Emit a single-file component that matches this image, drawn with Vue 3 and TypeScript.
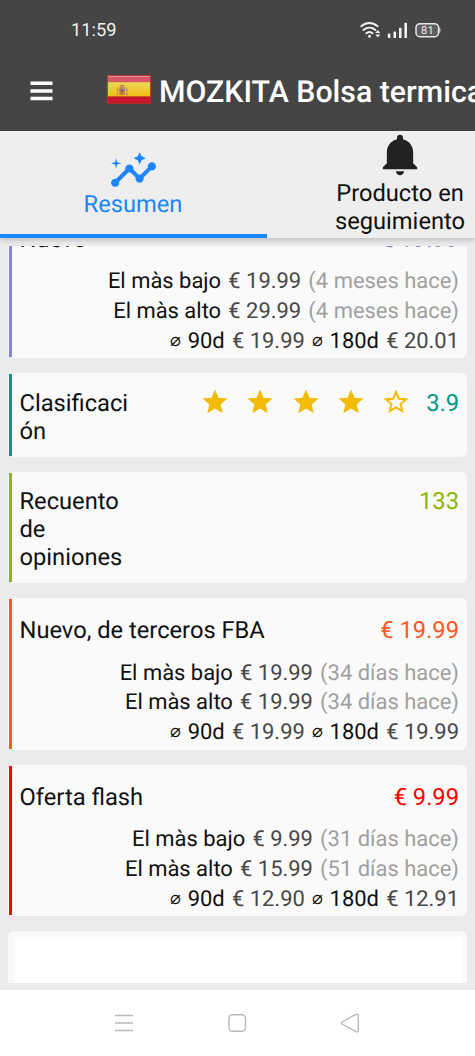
<script setup lang="ts">
interface HistoryRow {
  label: string
  price: string
  age: string
}

interface Card {
  title: string
  value: string
  tone: string
  rating?: number
  narrow?: boolean
  rows?: HistoryRow[]
  averages?: [string, string]
}

const cards: Card[] = [
  {
    title: 'Nuevo',
    value: '€ 19.99',
    tone: 'violet',
    rows: [
      { label: 'El màs bajo', price: '€ 19.99', age: '(4 meses hace)' },
      { label: 'El màs alto', price: '€ 29.99', age: '(4 meses hace)' },
    ],
    averages: ['€ 19.99', '€ 20.01'],
  },
  { title: 'Clasificación', value: '3.9', tone: 'teal', rating: 4, narrow: true },
  { title: 'Recuento de opiniones', value: '133', tone: 'olive', narrow: true },
  {
    title: 'Nuevo, de terceros FBA',
    value: '€ 19.99',
    tone: 'orange',
    rows: [
      { label: 'El màs bajo', price: '€ 19.99', age: '(34 días hace)' },
      { label: 'El màs alto', price: '€ 19.99', age: '(34 días hace)' },
    ],
    averages: ['€ 19.99', '€ 19.99'],
  },
  {
    title: 'Oferta flash',
    value: '€ 9.99',
    tone: 'red',
    rows: [
      { label: 'El màs bajo', price: '€ 9.99', age: '(31 días hace)' },
      { label: 'El màs alto', price: '€ 15.99', age: '(51 días hace)' },
    ],
    averages: ['€ 12.90', '€ 12.91'],
  },
]

const fullStar =
  'M12 17.27L18.18 21l-1.64-7.03L22 9.24l-7.19-.61L12 2 9.19 8.63 2 9.24l5.46 4.73L5.82 21z'
const emptyStar =
  'M22 9.24l-7.19-.62L12 2 9.19 8.63 2 9.24l5.46 4.73L5.82 21 12 17.27 18.18 21l-1.63-7.03L22 9.24zM12 15.4l-3.76 2.27 1-4.28-3.32-2.88 4.38-.38L12 6.1l1.71 4.04 4.38.38-3.32 2.88 1 4.28L12 15.4z'
</script>

<template>
  <div class="phone">
    <header class="top">
      <div class="status">
        <span class="clock">11:59</span>
        <svg class="signals" width="84" height="20" viewBox="0 0 84 20">
          <g fill="none" stroke="#f2f2f2" stroke-width="1.9" stroke-linecap="round">
            <path d="M2.2 6.2c5-4.2 11.400-4.200 16.400 0" />
            <path d="M4.500 9.900c3.600-3 8.300-3 11.900 0" />
            <path d="M7.300 13.300c2-1.600 4.400-1.600 6.300 0" />
          </g>
          <circle cx="10.500" cy="16.300" r="1.500" fill="#f2f2f2" />
          <path d="M16.300 12.900l2.500-3 2.500 3zM16.300 14.600h5l-2.500 3z" fill="#f2f2f2" />
          <g fill="#f2f2f2">
            <rect x="28.800" y="13.500" width="2.600" height="4.500" rx=".6" />
            <rect x="34.500" y="11.500" width="2.600" height="6.500" rx=".6" />
            <rect x="40" y="7.800" width="2.600" height="10.200" rx=".6" />
            <rect x="45.400" y="2.700" width="2.600" height="15.300" rx=".6" />
          </g>
          <rect x="57" y="3.700" width="22.600" height="13" rx="4" fill="#fff" fill-opacity=".14" stroke="#e8e8e8" stroke-width="1.500" />
          <path d="M80.300 7.300c1.500.8 1.500 5 0 5.800z" fill="#e8e8e8" />
          <text x="68.400" y="14.200" text-anchor="middle" class="battery">81</text>
        </svg>
      </div>
      <div class="bar">
        <svg class="menu" width="23" height="20" viewBox="0 0 23 20">
          <path d="M.5 2.200h22M.5 10h22M.5 17.400h22" stroke="#fff" stroke-width="3.500" />
        </svg>
        <svg class="flag" width="44" height="29" viewBox="0 0 44 29">
          <defs>
            <linearGradient id="gold" x1="0" y1="0" x2="0" y2="1">
              <stop offset="0" stop-color="#ecd65a" />
              <stop offset="1" stop-color="#f2bd12" />
            </linearGradient>
          </defs>
          <rect width="44" height="29" fill="#a92e2c" />
          <rect x=".8" y=".8" width="42.400" height="7" fill="#d95668" />
          <rect x=".8" y="7.200" width="42.400" height="14.400" fill="url(#gold)" />
          <rect x=".8" y="21.600" width="42.400" height="6.400" fill="#c5162c" />
          <path d="M1 1.400h42" stroke="#e8a0a5" stroke-width=".8" />
          <path d="M10.600 12.500v7.500M19.600 12.500v7.500" stroke="#c4a652" stroke-width="1.300" />
          <path d="M9.300 19.600h2.400M18.600 19.600h2.400M9.600 14.800h2M18.600 14.800h2" stroke="#b5853f" stroke-width=".9" />
          <path d="M12.300 12.200h5.600v5.500c0 3.500-5.600 3.500-5.600 0z" fill="#c07c48" />
          <path d="M15.300 12.300h2.600v3.400h-2.600z" fill="#9c94a0" />
          <path d="M12.600 11.400c0-2 5-2 5 0z" fill="#bd6a3a" />
          <circle cx="15.200" cy="15.700" r="1.200" fill="#5c5c83" />
        </svg>
        <h1 class="heading">MOZKITA Bolsa termica</h1>
      </div>
    </header>

    <nav class="tabs">
      <div class="tab tab-active">
        <svg width="49" height="49" viewBox="0 0 24 24" fill="#1b87fa">
          <path d="M21 8c-1.450 0-2.260 1.440-1.930 2.510l-3.550 3.560c-.3-.09-.74-.09-1.040 0l-2.550-2.550C12.270 10.450 11.460 9 10 9c-1.450 0-2.270 1.440-1.930 2.520l-4.560 4.550C2.440 15.740 1 16.550 1 18c0 1.100.9 2 2 2 1.450 0 2.260-1.440 1.930-2.510l4.550-4.560c.3.09.74.09 1.040 0l2.550 2.550C12.730 16.550 13.540 18 15 18c1.450 0 2.270-1.440 1.930-2.520l3.560-3.550C21.560 12.260 23 11.450 23 10c0-1.100-.9-2-2-2z" />
          <path d="M15 9l.94-2.070L18 6l-2.060-.93L15 3l-.92 2.070L12 6l2.080.93zM3.500 11L4 9l2-.5L4 8l-.5-2L3 8l-2 .5L3 9z" />
        </svg>
        <span class="tab-label">Resumen</span>
      </div>
      <div class="tab tab-track">
        <svg width="50" height="50" viewBox="0 0 512 512" fill="#222">
          <path d="M256 464c22.779 0 41.411-18.719 41.411-41.600h-82.823c0 22.881 18.633 41.600 41.412 41.600zm134.589-124.800V224.800c0-63.440-44.516-117.518-103.530-131.041V79.200c0-17.682-13.457-31.200-31.059-31.200s-31.059 13.518-31.059 31.200v14.559c-59.015 13.523-103.530 67.601-103.530 131.041v114.400L80 380.800v20.800h352v-20.800l-41.411-41.600z" />
        </svg>
        <span class="tab-label">Producto en<br />seguimiento</span>
      </div>
    </nav>

    <main class="scroller">
      <div class="list">
        <section
          v-for="card in cards"
          :key="card.title"
          class="card"
          :class="[card.tone, { compact: card.narrow }]"
        >
          <div class="head">
            <span class="title" :class="{ narrow: card.narrow }">{{ card.title }}</span>
            <span v-if="card.rating" class="stars">
              <svg v-for="n in 5" :key="n" width="30" height="30" viewBox="0 0 24 24" fill="#f2bb05">
                <path :d="n <= card.rating ? fullStar : emptyStar" />
              </svg>
            </span>
            <span class="value">{{ card.value }}</span>
          </div>
          <div v-if="card.rows" class="details">
            <div v-for="row in card.rows" :key="row.label" class="row">
              <span>{{ row.label }}</span>
              <span class="price">{{ row.price }}</span>
              <span class="age">{{ row.age }}</span>
            </div>
            <div v-if="card.averages" class="row">
              <span><i class="avg">⌀</i>90d</span>
              <span class="price">{{ card.averages[0] }}</span>
              <span><i class="avg">⌀</i>180d</span>
              <span class="price">{{ card.averages[1] }}</span>
            </div>
          </div>
        </section>
        <section class="card chart"><div class="canvas"></div></section>
      </div>
    </main>

    <footer class="system">
      <svg width="20" height="20" viewBox="0 0 20 20" fill="none" stroke="#b9b9b9" stroke-width="1.400">
        <path d="M1 2.500h18M1 10h18M1 17.500h18" />
      </svg>
      <svg width="20" height="20" viewBox="0 0 20 20" fill="none" stroke="#b9b9b9" stroke-width="1.400">
        <rect x="2" y="1.800" width="16.500" height="16.500" rx="3.500" />
      </svg>
      <svg width="20" height="20" viewBox="0 0 20 20" fill="none" stroke="#b9b9b9" stroke-width="1.400">
        <path d="M2 9l14-7.700q2.300-.8 2.300 1.500v14.400q0 2.300-2.300 1.500L2 11q-1.400-1 0-2z" />
      </svg>
    </footer>
  </div>
</template>

<style>
body {
  margin: 0;
  background: #ebebeb;
}
</style>

<style scoped>
.phone {
  width: 475px;
  height: 1056px;
  display: flex;
  flex-direction: column;
  overflow: hidden;
  background: #ebebeb;
  color: #101010;
  font-family: Roboto, "Liberation Sans", sans-serif;
  text-rendering: geometricPrecision;
}
.top {
  height: 131px;
  flex: none;
  background: #454545;
  color: #fff;
  overflow: hidden;
}
.status {
  height: 60px;
  padding: 0 32px 0 71px;
  display: flex;
  align-items: center;
  justify-content: space-between;
}
.clock {
  font-size: 18.300px;
  color: #f0f0f0;
}
.battery {
  font: 11px Roboto, sans-serif;
  fill: #f0f0f0;
  letter-spacing: 0.3px;
}
.bar {
  height: 62px;
  display: flex;
  align-items: center;
  padding-left: 30px;
}
.menu {
  flex: none;
}
.flag {
  flex: none;
  margin: -3px 8px 0 54px;
}
.heading {
  margin: 2px 0 0;
  font-size: 30.300px;
  font-weight: 500;
  white-space: nowrap;
}
.tabs {
  height: 107px;
  flex: none;
  display: flex;
  position: relative;
  background: #eee;
  box-shadow: 0 2px 5px rgba(0, 0, 0, 0.2);
}
.tab {
  width: 267px;
  height: 107px;
  flex: none;
  box-sizing: border-box;
  padding-right: 1px;
  display: flex;
  flex-direction: column;
  align-items: center;
  text-align: center;
  font-size: 23.700px;
  line-height: 28px;
}
.tab-active {
  padding-top: 15px;
  color: #1b87fa;
  border-bottom: 4px solid #1b87fa;
}
.tab-active .tab-label {
  margin-top: -5px;
}
.tab-track svg {
  margin-top: -1px;
}
.tab-track .tab-label {
  margin-top: -1px;
}
.scroller {
  height: 737px;
  flex: none;
  margin-top: 8px;
  overflow: hidden;
}
.list {
  margin-top: -39.600px;
  padding: 0 8px;
  display: flex;
  flex-direction: column;
  gap: 15px;
}
.card {
  height: 151.600px;
  flex: none;
  box-sizing: border-box;
  padding: 18.400px 8px 0 11.500px;
  position: relative;
  border-radius: 6px;
  background: #fafafa;
}
.card::before {
  content: "";
  position: absolute;
  left: 1px;
  top: 1px;
  bottom: 1px;
  width: 3px;
  background: var(--tone);
}
.compact {
  height: auto;
  padding: 15.500px 8px 12px 11.500px;
}
.violet { --tone: #8884d8; }
.teal { --tone: #009688; }
.olive { --tone: #8db600; }
.orange { --tone: #ff5722; }
.red { --tone: #ff0000; }
.head {
  display: flex;
  font-size: 23.700px;
  line-height: 28px;
}
.title {
  white-space: nowrap;
}
.narrow {
  width: 111px;
  white-space: normal;
  overflow-wrap: anywhere;
}
.stars {
  display: flex;
  gap: 15.300px;
  margin-left: 69.500px;
  height: 28px;
  margin-top: -2px;
}
.value {
  margin-left: auto;
  color: var(--tone);
  white-space: nowrap;
}
.details {
  margin-top: 14.200px;
  font-size: 21.950px;
}
.row {
  display: flex;
  justify-content: flex-end;
  gap: 7.200px;
  height: 29.800px;
  line-height: 29.800px;
  white-space: nowrap;
}
.price {
  color: #484848;
}
.age {
  color: #a0a0a0;
}
.avg {
  display: inline-block;
  width: 17.600px;
  font: normal 18px/20px "DejaVu Sans", sans-serif;
  vertical-align: 2px;
}
.chart {
  height: 80px;
  padding: 6px 4px 0 7px;
}
.chart::before {
  display: none;
}
.canvas {
  height: 70px;
  background: #fff;
}
.system {
  height: 66px;
  flex: none;
  margin-top: 7px;
  box-sizing: border-box;
  padding-right: 2px;
  display: flex;
  align-items: center;
  justify-content: center;
  gap: 93px;
  background: #fff;
}
</style>
